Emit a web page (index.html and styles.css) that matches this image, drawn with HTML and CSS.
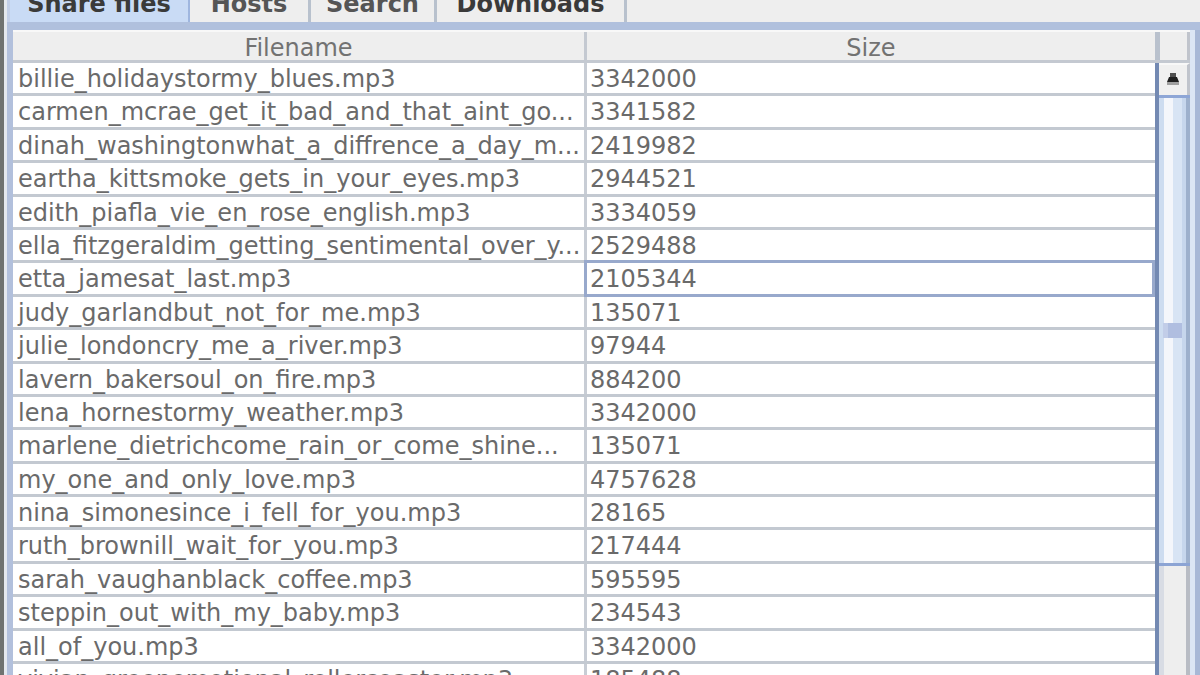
FILE: index.html
```html
<!DOCTYPE html>
<html>
<head>
<meta charset="utf-8">
<link rel="stylesheet" href="styles.css">
</head>
<body>
<div class="screen">
  <div class="edge-dark"></div>
  <div class="edge-light"></div>
  <div class="pane">
    <div class="tabstrip">
      <div class="tab tab-1 selected"><span>Share files</span></div>
      <div class="tab tab-2"><span>Hosts</span></div>
      <div class="tab tab-3"><span>Search</span></div>
      <div class="tab tab-4"><span>Downloads</span></div>
    </div>
    <div class="band"></div>
    <div class="content">
      <div class="left-stripe"></div>
      <div class="scrollpane">
        <div class="header">
          <div class="h-cell h-file">Filename</div>
          <div class="h-cell h-size">Size</div>
          <div class="h-corner"></div>
        </div>
        <div class="body">
          <div class="rows">
            <div class="row"><div class="c-file">billie_holidaystormy_blues.mp3</div><div class="c-size">3342000</div></div>
            <div class="row"><div class="c-file">carmen_mcrae_get_it_bad_and_that_aint_go...</div><div class="c-size">3341582</div></div>
            <div class="row"><div class="c-file">dinah_washingtonwhat_a_diffrence_a_day_m...</div><div class="c-size">2419982</div></div>
            <div class="row"><div class="c-file">eartha_kittsmoke_gets_in_your_eyes.mp3</div><div class="c-size">2944521</div></div>
            <div class="row"><div class="c-file">edith_piafla_vie_en_rose_english.mp3</div><div class="c-size">3334059</div></div>
            <div class="row"><div class="c-file">ella_fitzgeraldim_getting_sentimental_over_y...</div><div class="c-size">2529488</div></div>
            <div class="row"><div class="c-file">etta_jamesat_last.mp3</div><div class="c-size focus">2105344</div></div>
            <div class="row"><div class="c-file">judy_garlandbut_not_for_me.mp3</div><div class="c-size">135071</div></div>
            <div class="row"><div class="c-file">julie_londoncry_me_a_river.mp3</div><div class="c-size">97944</div></div>
            <div class="row"><div class="c-file">lavern_bakersoul_on_fire.mp3</div><div class="c-size">884200</div></div>
            <div class="row"><div class="c-file">lena_hornestormy_weather.mp3</div><div class="c-size">3342000</div></div>
            <div class="row"><div class="c-file">marlene_dietrichcome_rain_or_come_shine...</div><div class="c-size">135071</div></div>
            <div class="row"><div class="c-file">my_one_and_only_love.mp3</div><div class="c-size">4757628</div></div>
            <div class="row"><div class="c-file">nina_simonesince_i_fell_for_you.mp3</div><div class="c-size">28165</div></div>
            <div class="row"><div class="c-file">ruth_brownill_wait_for_you.mp3</div><div class="c-size">217444</div></div>
            <div class="row"><div class="c-file">sarah_vaughanblack_coffee.mp3</div><div class="c-size">595595</div></div>
            <div class="row"><div class="c-file">steppin_out_with_my_baby.mp3</div><div class="c-size">234543</div></div>
            <div class="row"><div class="c-file">all_of_you.mp3</div><div class="c-size">3342000</div></div>
            <div class="row"><div class="c-file">vivian_greenemotional_rollercoaster.mp3</div><div class="c-size">185488</div></div>
          </div>
          <div class="scrollbar">
            <div class="sb-button">
              <svg class="sb-arrow" width="18" height="14" viewBox="0 0 18 14">
                <rect x="3" y="10" width="12" height="3" fill="#a0a0a0"/>
                <polygon points="5,5 13,5 15,10 3,10" fill="#202020"/>
                <rect x="6" y="1" width="6" height="4" fill="#505050"/>
              </svg>
            </div>
            <div class="sb-thumb"><div class="sb-grip"></div></div>
            <div class="sb-track"></div>
          </div>
        </div>
      </div>
      <div class="right-stripe-1"></div>
      <div class="right-stripe-2"></div>
    </div>
  </div>
</div>
</body>
</html>
```

FILE: styles.css
```css
html, body {
  margin: 0;
  padding: 0;
}
body {
  width: 1200px;
  height: 675px;
  overflow: hidden;
  background: #eeeeee;
  font-family: "DejaVu Sans", sans-serif;
}
.screen {
  display: flex;
  height: 675px;
}
.edge-dark {
  width: 4px;
  background: #6f7270;
}
.edge-light {
  width: 3px;
  background: #e4e8ee;
}
.pane {
  flex: 1;
  display: flex;
  flex-direction: column;
  min-width: 0;
}
.tabstrip {
  height: 22px;
  display: flex;
  background: #eeeeee;
  border-left: 3px solid #c2cfe8;
}
.tab {
  height: 22px;
  overflow: hidden;
  text-align: center;
  font-weight: bold;
  font-size: 24px;
  color: #3a3a3a;
  box-sizing: border-box;
  border-right: 3px solid #b8c1cd;
}
.tab span {
  display: block;
  line-height: 24px;
  margin-top: -8px;
  white-space: nowrap;
}
.tab-1 { width: 180px; }
.tab-2 { width: 121px; color: #555; }
.tab-3 { width: 126px; color: #555; }
.tab-4 { width: 190px; }
.tab.selected {
  background: #c9dbf5;
  border-right: 2px solid #9fb6df;
}
.band {
  height: 8px;
  background: #b0c0dd;
}
.content {
  flex: 1;
  display: flex;
  min-height: 0;
}
.left-stripe {
  width: 6px;
  background: #b2c0dc;
}
.right-stripe-1 {
  width: 5px;
  background: #dce6f4;
}
.right-stripe-2 {
  width: 5px;
  background: #a8b8d6;
}
.scrollpane {
  flex: 1;
  display: flex;
  flex-direction: column;
  min-width: 0;
}
.header {
  display: flex;
  height: 33px;
  box-sizing: border-box;
  border-top: 2px solid #f8f8f8;
  border-bottom: 3px solid #c4c9d1;
  background: #eeeeee;
}
.h-cell {
  font-size: 24px;
  line-height: 25px;
  padding-top: 4px;
  text-align: center;
  color: #727272;
  box-sizing: border-box;
  overflow: hidden;
}
.h-file {
  width: 574px;
  border-right: 3px solid #c4c9d1;
}
.h-size {
  flex: 1;
  border-right: 5px solid #b9c1cd;
}
.h-corner {
  width: 30px;
  box-sizing: border-box;
  border-right: 3px solid #c0c4cc;
}
.body {
  flex: 1;
  display: flex;
  min-height: 0;
}
.rows {
  flex: 1;
  min-width: 0;
  background: #ffffff;
}
.row {
  display: flex;
  height: 33.4px;
  box-sizing: border-box;
  border-bottom: 3px solid #c3c9d1;
  background: #ffffff;
  font-size: 24px;
  color: #6a6a6a;
}
.c-file, .c-size {
  line-height: 29.4px;
  padding-top: 2px;
  white-space: nowrap;
  overflow: hidden;
  box-sizing: border-box;
}
.c-file {
  width: 574px;
  padding-left: 5px;
  border-right: 3px solid #c8cdd5;
}
.c-size {
  flex: 1;
  padding-left: 3px;
}
.c-size.focus {
  position: relative;
  overflow: visible;
}
.c-size.focus::after {
  content: "";
  position: absolute;
  left: -3px;
  right: 0;
  top: -3px;
  bottom: -3px;
  border: 3px solid #98a9cc;
}
.scrollbar {
  width: 35px;
  display: flex;
  flex-direction: column;
  box-sizing: border-box;
  border-left: 4px solid #7389b2;
}
.sb-button {
  height: 32px;
  box-sizing: border-box;
  background: #f0f0f0;
  border-top: 2px solid #f8f8f8;
  border-right: 3px solid #c0c4cc;
  display: flex;
  align-items: flex-start;
  justify-content: center;
  padding-top: 7px;
}
.sb-thumb {
  height: 471px;
  box-sizing: border-box;
  border-top: 3px solid #8ea6d6;
  border-bottom: 3px solid #8ca4d4;
  background: linear-gradient(to right,
    #cddcf0 0, #cddcf0 5px,
    #f4f6fb 5px, #f4f6fb 14px,
    #d8e4f4 14px, #d8e4f4 23px,
    #c6d6ec 23px, #c6d6ec 27px,
    #9db0cc 27px, #9db0cc 31px);
  display: flex;
  align-items: center;
  padding-left: 4px;
}
.sb-grip {
  width: 19px;
  height: 15px;
  background: linear-gradient(to right, #c2cde8 0, #c2cde8 5px, #b0bee0 5px);
}
.sb-track {
  flex: 1;
  background: linear-gradient(to right,
    #d8dce4 0, #d8dce4 5px,
    #eeeeee 5px, #eeeeee 27px,
    #b8bcc4 27px, #b8bcc4 31px);
}
```
